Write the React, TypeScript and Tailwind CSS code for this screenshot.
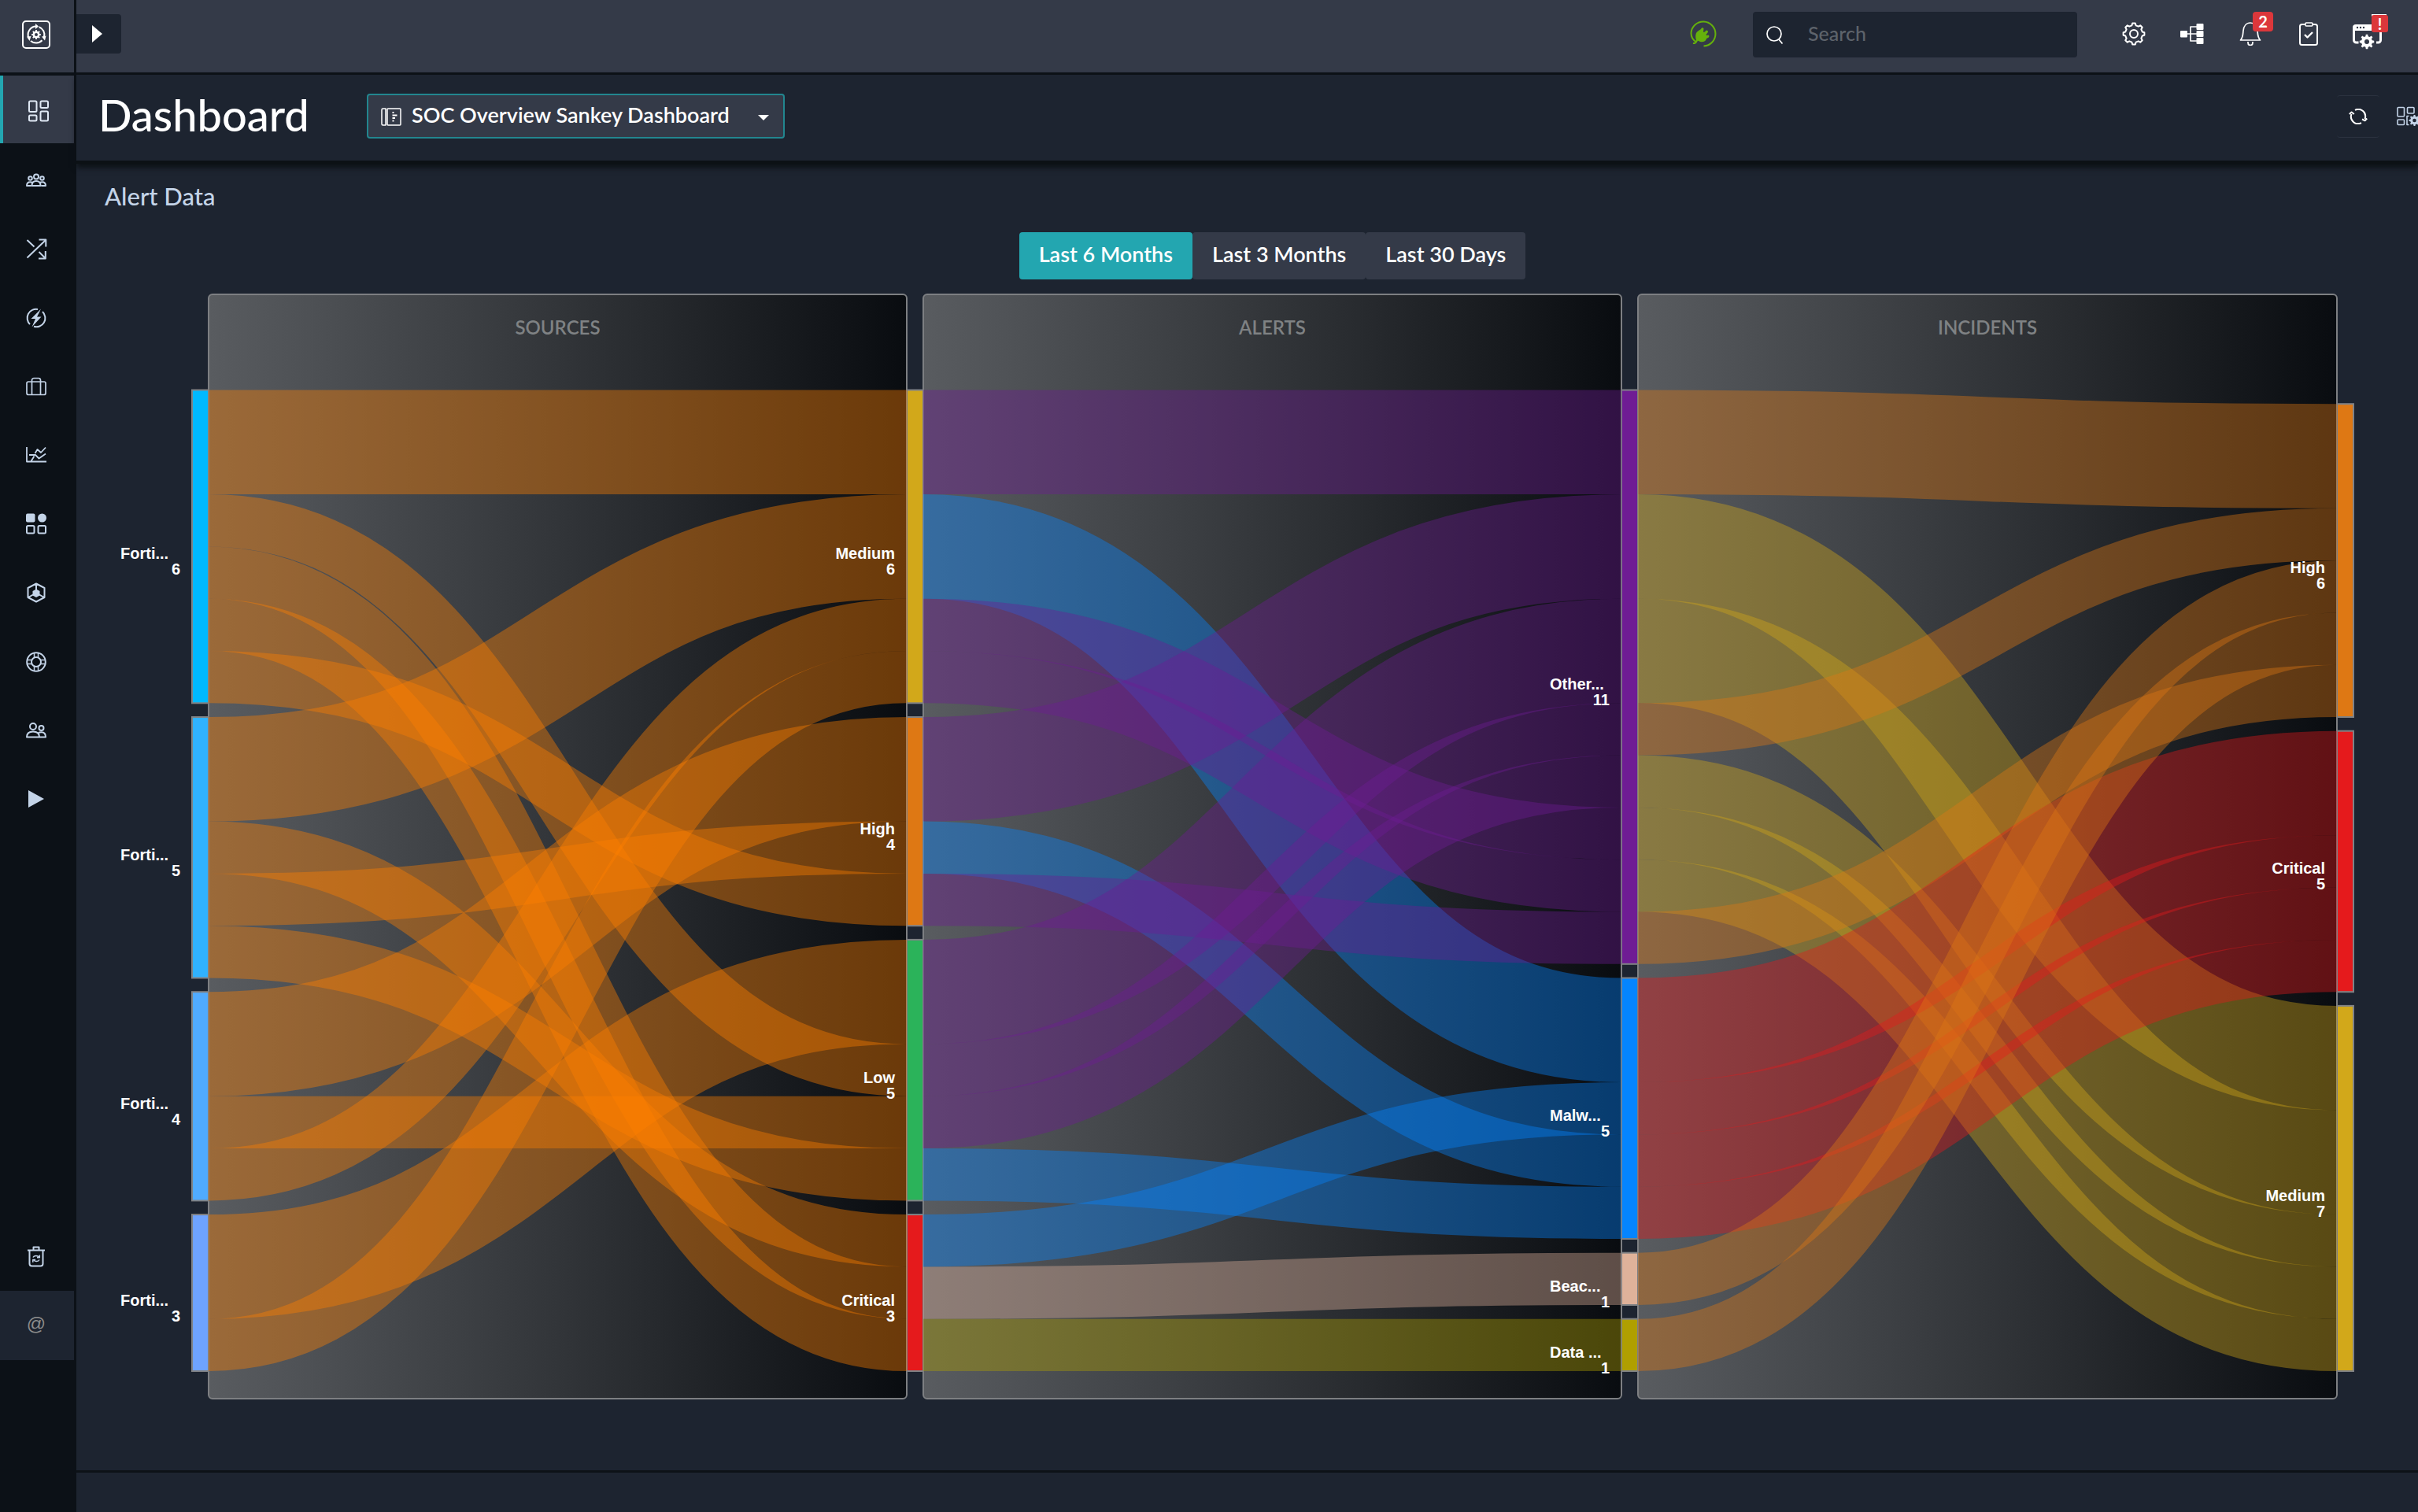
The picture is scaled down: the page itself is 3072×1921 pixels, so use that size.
import React from "react";

/* ---------- icons ---------- */

function gearPath(cx: number, cy: number, outer: number, inner: number, teeth: number) {
  const step = (Math.PI * 2) / teeth;
  const at = (r: number, a: number) => `${(cx + r * Math.sin(a)).toFixed(2)} ${(cy - r * Math.cos(a)).toFixed(2)}`;
  let d = "";
  for (let i = 0; i < teeth; i++) {
    const a = i * step;
    d += `${i === 0 ? "M" : "L"}${at(outer, a - step * 0.17)} L${at(outer, a + step * 0.17)} L${at(inner, a + step * 0.3)} L${at(inner, a + step * 0.7)} `;
  }
  return d + "Z";
}

type IconProps = { w: number; h: number; children: React.ReactNode; className?: string };

function Icon({ w, h, children, className }: IconProps) {
  return (
    <svg
      width={w}
      height={h}
      viewBox={`0 0 ${w} ${h}`}
      fill="none"
      stroke="currentColor"
      strokeWidth={2}
      strokeLinejoin="round"
      className={`shrink-0 ${className ?? ""}`}
      aria-hidden="true"
    >
      {children}
    </svg>
  );
}

const LogoIcon = () => (
  <Icon w={36} h={36}>
    <rect x="1" y="1" width="34" height="34" rx="4" />
    <path d="M18 7.5A10.5 10.5 0 0 0 8.6 22.5" />
    <path d="M21.5 8.2A10.5 10.5 0 0 1 28 21" />
    <path d="M25.5 25.3A10.5 10.5 0 0 1 11 26" />
    <path d="M17 4l4 3.5-4 3.5zM6 20.5l5.5-.5-2 6zM30.500 19.500l-5.500 1 4 5z" fill="currentColor" stroke="none" />
    <path d={gearPath(18, 18, 6, 4.5, 8)} fill="currentColor" stroke="none" />
    <circle cx="18" cy="18" r="2" fill="#343a48" stroke="none" />
  </Icon>
);

const DashboardIcon = () => (
  <Icon w={26} h={28}>
    <rect x="1" y="1.500" width="9.500" height="13.500" rx="1.500" />
    <rect x="15.500" y="1.500" width="9.500" height="8.500" rx="1.500" />
    <rect x="1" y="19.500" width="9.500" height="7" rx="1.500" />
    <rect x="15.500" y="14.500" width="9.500" height="12" rx="1.500" />
  </Icon>
);

const TeamIcon = () => (
  <Icon w={26} h={18}>
    <circle cx="13" cy="4.500" r="3" />
    <circle cx="5.500" cy="6.500" r="2.300" />
    <circle cx="20.500" cy="6.500" r="2.300" />
    <path d="M7.500 16c0-4 2.200-6 5.500-6s5.500 2 5.500 6zM6.500 16H1c0-3 1.500-4.800 4.500-4.800 1 0 1.800.2 2.400.6M19.500 16H25c0-3-1.500-4.800-4.500-4.800-1 0-1.800.2-2.400.6" />
  </Icon>
);

const ShuffleIcon = () => (
  <Icon w={27} h={27}>
    <path d="M1.500 2l9 8.500M1.500 24.500L25 2M16.500 1.500h8.800v9M16.500 17l8 8M16 25.500h8.800V16" />
  </Icon>
);

const BoltIcon = () => (
  <Icon w={26} h={26}>
    <path d="M15 2A11.200 11.200 0 0 0 5 21M10 23.800A11.200 11.200 0 0 0 21 5" />
    <path d="M19 1.500L6.500 14h5.500L7.500 24.500 19.500 11.500H14z" fill="currentColor" stroke="none" />
  </Icon>
);

const CaseIcon = () => (
  <Icon w={26} h={24}>
    <rect x="1" y="6" width="24" height="16.500" rx="2" strokeWidth={1.700} />
    <path d="M7.500 22.500V4A2.500 2.500 0 0 1 10 1.500h6A2.500 2.500 0 0 1 18.500 4v18.500" strokeWidth={1.700} />
  </Icon>
);

const ChartIcon = () => (
  <Icon w={26} h={22}>
    <path d="M1 1v18.500h25M6.500 19l4-6.500M4 11h8l4.500 4.500 8.500-6M11.500 9l3-5 4.500 4L25 1.500" strokeWidth={1.8} />
  </Icon>
);

const WidgetsIcon = () => (
  <Icon w={26} h={27}>
    <rect x="0" y="0.500" width="11.500" height="11" rx="2" fill="currentColor" stroke="none" />
    <ellipse cx="20.500" cy="6" rx="5.500" ry="5.500" fill="currentColor" stroke="none" />
    <rect x="1" y="16" width="9.500" height="9.500" rx="1.500" />
    <rect x="15.500" y="16" width="9.500" height="9.500" rx="1.500" />
  </Icon>
);

const CubeIcon = () => (
  <Icon w={24} h={26}>
    <path d="M12 1.500l10.500 5.500v12L12 24.500 1.500 19V7zM12 2v8M2 19l6-3.500M22 19l-6-3.500" />
    <path d="M12 8.500l4.500 2.500v5.500L12 19l-4.500-2.500V11z" fill="currentColor" stroke="none" />
  </Icon>
);

const LifebuoyIcon = () => (
  <Icon w={26} h={26}>
    <circle cx="13" cy="13" r="11.800" />
    <circle cx="13" cy="13" r="6" />
    <path d="M10.500 1.500v6M15.500 1.500v6M10.500 18.500v6M15.500 18.500v6M1.500 10.500h6M1.500 15.500h6M18.500 10.500h6M18.500 15.500h6" strokeWidth={1.5} />
  </Icon>
);

const UsersIcon = () => (
  <Icon w={26} h={20}>
    <circle cx="9" cy="5" r="4" />
    <circle cx="19.500" cy="7" r="3" />
    <path d="M1 18.500c0-4.500 3-7 8-7s8 2.500 8 7zM15.500 13.500c1-.8 2.400-1.200 4-1.200 3.500 0 5.500 2 5.500 6.200h-8" />
  </Icon>
);

const PlayIcon = () => (
  <Icon w={20} h={22}>
    <path d="M0 0l20 11L0 22z" fill="currentColor" stroke="none" />
  </Icon>
);

const TrashIcon = () => (
  <Icon w={22} h={27}>
    <path d="M0 5.500h22M7.500 5V1.500h7V5M2.500 6v16.500a3 3 0 0 0 3 3h11a3 3 0 0 0 3-3V6" />
    <path d="M7 14.500c1-2.500 6-3 7.500 0M15.300 11.500v3.300h-3.300M15 17.500c-1 2.500-6 3-7.500 0M6.800 20.800v-3.300h3.300" strokeWidth={1.5} />
  </Icon>
);

const PlugIcon = () => (
  <Icon w={34} h={34}>
    <path d="M8.500 27.500C3.500 25 1.500 20.500 1.500 16a15.500 15.500 0 1 1 16 16.500" />
    <path d="M4 29c4 1 4-3 6-5" />
    <path
      d="M8 25c-1.500-5-1-10 3-12l3-2c.5-2 3-2.500 3.500-.5l-.5 4 1 .5 3-2.500c2 0 2.500 2 1.500 3l-2 2.500.5 1 2.500-.5c1.500 1 1 2.500 0 3.300l-2.500 1.200c-1 4.500-6.500 5.500-10 3z"
      fill="currentColor"
      stroke="none"
    />
  </Icon>
);

const SearchIcon = () => (
  <Icon w={22} h={24}>
    <circle cx="10" cy="10" r="9" strokeWidth={1.700} />
    <path d="M15.500 16.500L20.500 22.500" strokeWidth={1.700} />
  </Icon>
);

const SettingsIcon = () => (
  <Icon w={30} h={30}>
    <path d={gearPath(15, 15, 13.5, 11, 8)} />
    <circle cx="15" cy="15" r="5" />
  </Icon>
);

const TreeIcon = () => (
  <Icon w={30} h={26}>
    <path d="M6 13h16M21 4h-8v18h8" strokeWidth={1.700} />
    <g fill="currentColor" stroke="none">
      <rect x="0" y="9" width="9" height="8.500" rx="1" />
      <rect x="20.500" y="0" width="9" height="8" rx="1" />
      <rect x="20.500" y="9" width="9" height="8" rx="1" />
      <rect x="20.500" y="18" width="9" height="8" rx="1" />
    </g>
  </Icon>
);

const BellIcon = () => (
  <Icon w={28} h={30}>
    <path d="M1.500 23C5 19 4.500 15 5 11c.6-6 4-10 9-10s8.400 4 9 10c.5 4 0 8 3.500 12z" strokeWidth={1.700} />
    <path d="M11 25v1.500a3 3 0 0 0 6 0V25" strokeWidth={1.700} />
  </Icon>
);

const ClipboardIcon = () => (
  <Icon w={24} h={30}>
    <rect x="1" y="3" width="22" height="26" rx="2.500" />
    <rect x="8" y="1" width="9" height="4" rx="1" fill="#343a48" strokeWidth={1.600} />
    <path d="M7 16l3.500 3.500 6.500-6.500" strokeWidth={2.400} />
  </Icon>
);

const WindowGearIcon = () => (
  <Icon w={44} h={44} className="overflow-visible">
    <path d="M26 -1.500h19" strokeWidth={3} />
    <path d="M9.500 33H6.500a3 3 0 0 1-3-3V13M32 33h2.500a3 3 0 0 0 3-3V18" strokeWidth={3} />
    <path d="M2 18v-4a4 4 0 0 1 4-4h20v8z" fill="currentColor" stroke="none" />
    <g fill="#343a48" stroke="none">
      <circle cx="8" cy="14" r="1.200" />
      <circle cx="12" cy="14" r="1.200" />
      <circle cx="16" cy="14" r="1.200" />
    </g>
    <path d={gearPath(20, 32, 9.3, 7, 8)} fill="currentColor" stroke="none" />
    <circle cx="20" cy="32" r="3" fill="#343a48" stroke="none" />
  </Icon>
);

const RefreshIcon = () => (
  <Icon w={24} h={20}>
    <path d="M8 1.800A9 9 0 0 1 20.500 13M16 18.200A9 9 0 0 1 3.500 7M.8 7l2.800-2.500L6.800 7M17 13.500l3.600 1.800 2.600-2.800" />
  </Icon>
);

const DashboardGearIcon = () => (
  <Icon w={34} h={26}>
    <rect x="1" y="1.500" width="8.500" height="11.500" rx="1" strokeWidth={1.600} />
    <rect x="13.500" y="1.500" width="8.500" height="7.500" rx="1" strokeWidth={1.600} />
    <rect x="1" y="17" width="8.500" height="6.500" rx="1" strokeWidth={1.600} />
    <path d="M15.500 12.500h-2.500v11h2.500" strokeWidth={1.600} />
    <path d={gearPath(22.5, 18, 7, 5.3, 8)} fill="currentColor" stroke="none" />
    <circle cx="22.500" cy="18" r="2.300" fill="#1d2430" stroke="none" />
  </Icon>
);

const TemplateIcon = () => (
  <Icon w={26} h={23}>
    <path d="M6 1H2.500A1.500 1.500 0 0 0 1 2.500v18A1.500 1.500 0 0 0 2.500 22H6z" strokeWidth={1.500} />
    <rect x="8" y="1" width="17" height="21" rx="1" strokeWidth={1.500} />
    <path d="M14.500 6h2M14.500 9.500h6M14.500 13h3.500M14.500 16.500h2" strokeWidth={1.800} />
  </Icon>
);

/* ---------- sankey ---------- */

const UNIT = 66.3;
const GAP = 17.7;
const BOTTOM = 1742;
const NODE_W = 21;
const COLUMN_X = [244, 1152, 2060, 2969];
const PANEL_TITLES = ["SOURCES", "ALERTS", "INCIDENTS"];

type Node = { name: string; value: number; color: string; cut?: boolean };

const COLUMNS: Node[][] = [
  [
    { name: "Forti...", value: 6, color: "#00b9ff", cut: true },
    { name: "Forti...", value: 5, color: "#30b2ff", cut: true },
    { name: "Forti...", value: 4, color: "#50abff", cut: true },
    { name: "Forti...", value: 3, color: "#6ea3ff", cut: true },
  ],
  [
    { name: "Medium", value: 6, color: "#d2a81a" },
    { name: "High", value: 4, color: "#de7814" },
    { name: "Low", value: 5, color: "#2bb35a" },
    { name: "Critical", value: 3, color: "#e51a1c" },
  ],
  [
    { name: "Other...", value: 11, color: "#6f1c94", cut: true },
    { name: "Malw...", value: 5, color: "#0585ff", cut: true },
    { name: "Beac...", value: 1, color: "#dfb29a", cut: true },
    { name: "Data ...", value: 1, color: "#b09f00", cut: true },
  ],
  [
    { name: "High", value: 6, color: "#de7814" },
    { name: "Critical", value: 5, color: "#e51a1c" },
    { name: "Medium", value: 7, color: "#d2a81a" },
  ],
];

const SOURCE_LINK_COLOR = "#ff8000";

/* [source node, offset in source, target node, offset in target, value] */
type Link = [number, number, number, number, number];

const LINKS: Link[][] = [
  [
    [0, 0, 0, 0, 2],
    [0, 2, 2, 2, 1],
    [0, 3, 3, 1, 1],
    [0, 4, 3, 2, 1],
    [0, 5, 1, 3, 1],
    [1, 0, 0, 2, 2],
    [1, 2, 3, 0, 1],
    [1, 3, 1, 2, 1],
    [1, 4, 2, 4, 1],
    [2, 0, 1, 0, 2],
    [2, 2, 2, 3, 1],
    [2, 3, 0, 4, 1],
    [3, 0, 2, 0, 2],
    [3, 2, 0, 5, 1],
  ],
  [
    [0, 0, 0, 0, 2],
    [0, 2, 1, 0, 2],
    [0, 4, 0, 8, 1],
    [0, 5, 0, 9, 1],
    [1, 0, 0, 2, 2],
    [1, 2, 1, 3, 1],
    [1, 3, 0, 10, 1],
    [2, 0, 0, 4, 2],
    [2, 2, 0, 6, 1],
    [2, 3, 0, 7, 1],
    [2, 4, 1, 4, 1],
    [3, 0, 1, 2, 1],
    [3, 1, 2, 0, 1],
    [3, 2, 3, 0, 1],
  ],
  [
    [0, 0, 0, 0, 2],
    [0, 2, 2, 0, 2],
    [0, 4, 2, 2, 2],
    [0, 6, 0, 2, 1],
    [0, 7, 2, 4, 1],
    [0, 8, 2, 5, 1],
    [0, 9, 2, 6, 1],
    [0, 10, 0, 5, 1],
    [1, 0, 1, 0, 2],
    [1, 2, 1, 2, 1],
    [1, 3, 1, 3, 1],
    [1, 4, 1, 4, 1],
    [2, 0, 0, 3, 1],
    [3, 0, 0, 4, 1],
  ],
];

function nodeTops(column: Node[]) {
  const total = column.reduce((sum, n) => sum + n.value, 0) * UNIT + (column.length - 1) * GAP;
  let y = BOTTOM - total;
  return column.map((n) => {
    const top = y;
    y += n.value * UNIT + GAP;
    return top;
  });
}

function Sankey() {
  const tops = COLUMNS.map(nodeTops);
  return (
    <svg viewBox="97 364 2975 1420" className="block w-full" role="img" aria-label="Sources, alerts and incidents">
      <defs>
        <linearGradient id="panel" x1="0" x2="1" y1="0" y2="0">
          <stop offset="0" stopColor="#595c60" />
          <stop offset="0.5" stopColor="#323539" />
          <stop offset="1" stopColor="#090c10" />
        </linearGradient>
      </defs>

      {PANEL_TITLES.map((title, i) => {
        const x = COLUMN_X[i] + NODE_W;
        const w = COLUMN_X[i + 1] - x;
        return (
          <g key={title}>
            <rect x={x} y={374} width={w} height={1403} rx={5} fill="url(#panel)" />
            <text x={x + w / 2} y={425} textAnchor="middle" fill="#7f8284" className="font-['Lato',sans-serif] text-[24px] font-semibold">
              {title}
            </text>
          </g>
        );
      })}

      {COLUMNS.map((column, c) =>
        column.map((n, i) => (
          <rect
            key={`${c}-${i}`}
            x={COLUMN_X[c]}
            y={tops[c][i]}
            width={NODE_W}
            height={n.value * UNIT}
            fill={n.color}
            stroke="#808285"
            strokeWidth={2}
          />
        )),
      )}

      {PANEL_TITLES.map((title, i) => (
        <rect
          key={title}
          x={COLUMN_X[i] + NODE_W}
          y={374}
          width={COLUMN_X[i + 1] - COLUMN_X[i] - NODE_W}
          height={1403}
          rx={5}
          fill="none"
          stroke="#7d7f82"
          strokeWidth={2}
        />
      ))}

      {LINKS.map((links, c) =>
        links.map(([s, so, t, to, v], i) => {
          const x0 = COLUMN_X[c] + NODE_W;
          const x1 = COLUMN_X[c + 1];
          const xm = (x0 + x1) / 2;
          const y0 = tops[c][s] + (so + v / 2) * UNIT;
          const y1 = tops[c + 1][t] + (to + v / 2) * UNIT;
          const color = c === 0 ? SOURCE_LINK_COLOR : COLUMNS[c + 1][t].color;
          return (
            <path
              key={`${c}-${i}`}
              d={`M${x0} ${y0}C${xm} ${y0} ${xm} ${y1} ${x1} ${y1}`}
              fill="none"
              stroke={color}
              strokeOpacity={0.4}
              strokeWidth={v * UNIT}
            />
          );
        }),
      )}

      {COLUMNS.map((column, c) =>
        column.map((n, i) => {
          const right = COLUMN_X[c] - 15;
          const mid = tops[c][i] + (n.value * UNIT) / 2;
          return (
            <g key={`${c}-${i}`} fill="#ffffff" className="font-['Liberation_Sans',Arial,sans-serif] text-[20px] font-bold">
              <text x={n.cut ? right - 76 : right} y={mid + 16} textAnchor={n.cut ? "start" : "end"}>
                {n.name}
              </text>
              <text x={right} y={mid + 36} textAnchor="end">
                {n.value}
              </text>
            </g>
          );
        }),
      )}
    </svg>
  );
}

/* ---------- page ---------- */

const NAV = [
  { label: "Teams", icon: <TeamIcon /> },
  { label: "Playbooks", icon: <ShuffleIcon /> },
  { label: "Automation", icon: <BoltIcon /> },
  { label: "Cases", icon: <CaseIcon /> },
  { label: "Reports", icon: <ChartIcon /> },
  { label: "Widgets", icon: <WidgetsIcon /> },
  { label: "Content", icon: <CubeIcon /> },
  { label: "Help", icon: <LifebuoyIcon /> },
  { label: "Users", icon: <UsersIcon /> },
  { label: "Run", icon: <PlayIcon /> },
];

function Sidebar() {
  return (
    <aside className="flex w-[97px] shrink-0 flex-col bg-[#0c1117] text-[#c4d4e8]">
      <a href="#home" aria-label="Home" className="mr-[3px] flex h-[92px] items-center justify-center bg-[#343a48] pr-0.5 pb-1 text-white">
        <LogoIcon />
      </a>
      <nav className="mt-1 flex flex-col pr-[3px]" aria-label="Main">
        <a
          href="#dashboard"
          aria-label="Dashboard"
          className="mb-[3px] flex h-[86px] items-center justify-center border-l-[4px] border-[#23a6b0] bg-[#343a48] pt-1 text-[#dfe8f4]"
        >
          <DashboardIcon />
        </a>
        <div className="flex h-[874px] flex-col">
          {NAV.map((item) => (
            <a key={item.label} href="#nav" aria-label={item.label} className="flex flex-1 items-center justify-center pr-0.5">
              {item.icon}
            </a>
          ))}
        </div>
      </nav>
      <div className="mt-auto mb-[193px] flex flex-col pr-[3px]">
        <a href="#recycle" aria-label="Recycle bin" className="flex h-[88px] items-center justify-center pr-0.5">
          <TrashIcon />
        </a>
        <a
          href="#contact"
          aria-label="Contact"
          className="flex h-[88px] items-center justify-center bg-[#1d2430] pr-0.5 pb-1 font-['Liberation_Sans',sans-serif] text-[24px] text-[#8c8c8c]"
        >
          @
        </a>
      </div>
    </aside>
  );
}

function Header() {
  return (
    <header className="flex h-[95px] items-center border-b-[3px] border-[#0d1217] bg-[#343a48] pr-7 pb-1.5 text-white">
      <button type="button" aria-label="Expand menu" className="flex h-[50px] w-[57px] items-center justify-center rounded-r bg-[#1d2430] pr-1 text-white">
        <svg width="13" height="22" viewBox="0 0 13 22" fill="currentColor" aria-hidden="true">
          <path d="M0 0l13 11L0 22z" />
        </svg>
      </button>
      <span className="mr-[46px] ml-auto text-[#65b00c]">
        <PlugIcon />
      </span>
      <div className="relative mt-0.5 mr-[35px]">
        <span className="pointer-events-none absolute top-[18px] left-[17px]">
          <SearchIcon />
        </span>
        <input
          type="text"
          aria-label="Search"
          placeholder="Search"
          className="h-[58px] w-[412px] rounded bg-[#1d2430] pr-4 pb-1 pl-[70px] text-[25px] font-medium outline-none placeholder:text-[#5d636b]"
        />
      </div>
      <button type="button" aria-label="Settings" className="flex w-[74px] justify-center">
        <SettingsIcon />
      </button>
      <button type="button" aria-label="Topology" className="flex w-[74px] justify-center">
        <TreeIcon />
      </button>
      <button type="button" aria-label="Notifications" className="relative flex w-[74px] justify-center">
        <BellIcon />
        <span className="absolute -top-[13px] left-[40px] flex h-[25px] w-[26px] items-center justify-center rounded bg-[#dc373b] pb-0.5 text-[20px] font-bold">
          2
        </span>
      </button>
      <button type="button" aria-label="Tasks" className="flex w-[74px] justify-center">
        <ClipboardIcon />
      </button>
      <button type="button" aria-label="System status" className="relative flex w-[74px] justify-center pl-1">
        <WindowGearIcon />
        <span className="absolute -top-0.5 left-[43px] flex h-[22px] w-[21px] items-center justify-center rounded-[3px] bg-[#dc373b] text-[20px] font-bold">
          !
        </span>
      </button>
    </header>
  );
}

function TitleBar() {
  return (
    <div className="relative flex h-[113px] items-center border-b-[4px] border-[#0c1115] shadow-[0_5px_7px_#0c1115]">
      <h1 className="w-[369px] pb-2 pl-7 text-[56px] leading-none font-medium text-white">Dashboard</h1>
      <div className="relative -mt-1 w-[531px] text-white">
        <span className="pointer-events-none absolute top-[18px] left-[18px]">
          <TemplateIcon />
        </span>
        <select
          aria-label="Dashboard"
          className="h-[57px] w-full appearance-none rounded border-2 border-[#22868f] bg-[#343a48] pr-14 pb-0.5 pl-[55px] text-[27px] font-semibold text-white"
        >
          <option>SOC Overview Sankey Dashboard</option>
        </select>
        <svg width="14" height="7" viewBox="0 0 14 7" fill="currentColor" className="pointer-events-none absolute top-[27px] right-[20px]" aria-hidden="true">
          <path d="M0 0h14L7 7z" />
        </svg>
      </div>
      <button type="button" aria-label="Refresh" className="mr-[22px] mb-1 ml-auto flex h-[54px] w-[54px] items-center justify-center rounded border-y border-[#2b323f] text-white">
        <RefreshIcon />
      </button>
      <button type="button" aria-label="Dashboard settings" className="mb-1 w-[27px] overflow-hidden text-[#c4d4e8]">
        <DashboardGearIcon />
      </button>
    </div>
  );
}

const RANGES = ["Last 6 Months", "Last 3 Months", "Last 30 Days"];

export default function App() {
  return (
    <div className="flex min-h-screen bg-[#1d2430] font-['Lato',sans-serif]">
      <Sidebar />
      <div className="flex min-w-0 flex-1 flex-col">
        <Header />
        <TitleBar />
        <main className="flex-1">
          <h2 className="mt-[23px] ml-9 text-[31px] leading-9 font-medium text-[#c4d4e8]">Alert Data</h2>
          <div className="mt-[28px] mb-[9px] flex justify-center pl-16 text-[27px] font-semibold text-white">
            {RANGES.map((range, i) => (
              <button
                key={range}
                type="button"
                className={i === 0 ? "h-[60px] rounded bg-[#23a6b0] px-[25px] pb-1" : "h-[60px] rounded bg-[#343a48] px-[25px] pb-1"}
              >
                {range}
              </button>
            ))}
          </div>
          <Sankey />
        </main>
        <footer className="h-[53px] border-t-[3px] border-[#0d1217]" />
      </div>
    </div>
  );
}
